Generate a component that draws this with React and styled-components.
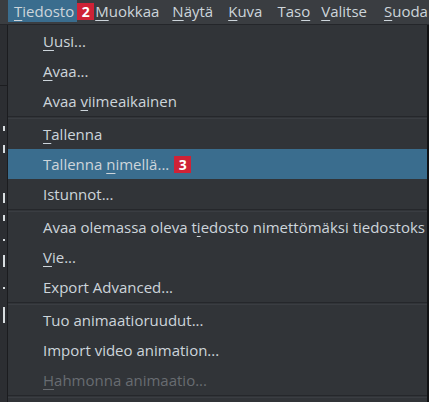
import React from "react";
import styled, { createGlobalStyle } from "styled-components";

const Global = createGlobalStyle`
  html, body { margin: 0; padding: 0; background: #2b2d31; }
  body { width: 429px; height: 402px; overflow: hidden; }
  #root { width: 429px; height: 402px; }
`;

const Screen = styled.div`
  width: 429px;
  height: 402px;
  display: flex;
  flex-direction: column;
  background: #313438;
  font-family: "Open Sans", "Noto Sans", sans-serif;
  font-size: 15px;
  color: #cdd5db;
  overflow: hidden;
`;

const MenuBar = styled.div`
  height: 24px;
  flex: none;
  display: flex;
  align-items: stretch;
  background: #3a3d41;
  border-bottom: 1px solid #24262a;
  padding-left: 8px;
  white-space: nowrap;
  overflow: hidden;
`;

const BarItem = styled.div`
  display: flex;
  align-items: center;
  padding: 0 ${(p) => p.$pr ?? 8}px 0 ${(p) => p.$pl ?? 7}px;
  height: 22px;
  flex: none;
  background: ${(p) => (p.$active ? "#3a6d8e" : "transparent")};
  color: #cdd5db;
`;

const Mn = styled.span`
  text-decoration: underline;
  text-decoration-thickness: 1px;
  text-underline-offset: 3px;
`;

const Badge = styled.span`
  display: inline-flex;
  align-items: center;
  justify-content: center;
  width: 17px;
  height: 17px;
  background: #cf2236;
  color: #ffffff;
  font-family: "Open Sans", "Noto Sans", sans-serif;
  font-weight: 700;
  font-size: 14px;
  margin-left: ${(p) => p.$ml ?? 0}px;
  margin-top: ${(p) => p.$mt ?? 0}px;
  flex: none;
`;

const Body = styled.div`
  flex: 1;
  display: flex;
  min-height: 0;
`;

const SideStrip = styled.div`
  width: 7px;
  flex: none;
  background: #2c2e32;
  border-right: 1px solid #1b1c1f;
  display: flex;
  flex-direction: column;
  align-items: center;
  padding-top: 60px;
`;

const Tick = styled.div`
  width: ${(p) => p.$w ?? 2}px;
  height: ${(p) => p.$h}px;
  margin-top: ${(p) => p.$mt}px;
  background: ${(p) => p.$c ?? "#d8dde0"};
`;

const Menu = styled.div`
  flex: 1;
  display: flex;
  flex-direction: column;
  padding-top: 1px;
  background: #313438;
  overflow: hidden;
`;

const Item = styled.div`
  height: 30px;
  flex: none;
  display: flex;
  align-items: center;
  padding-left: 35px;
  white-space: nowrap;
  background: ${(p) => (p.$active ? "#3a6d8e" : "transparent")};
  color: ${(p) => (p.$disabled ? "#686c71" : "#cdd5db")};
`;

const Sep = styled.div`
  height: 3px;
  flex: none;
  border-top: 1px solid #25272b;
  border-bottom: 1px solid #3a3d42;
  box-sizing: border-box;
`;

const RightEdge = styled.div`
  width: 2px;
  flex: none;
  background: #111214;
`;

export default function App() {
  return (
    <>
      <Global />
      <Screen>
        <MenuBar>
          <BarItem $active $pl={6} $pr={3}>
            <Mn>T</Mn>iedosto
          </BarItem>
          <Badge $mt={3}>2</Badge>
          <BarItem $pl={1} $pr={8}>
            <Mn>M</Mn>uokkaa
          </BarItem>
          <BarItem $pl={5} $pr={7}>
            <Mn>N</Mn>äytä
          </BarItem>
          <BarItem $pl={8} $pr={9}>
            <Mn>K</Mn>uva
          </BarItem>
          <BarItem $pl={6} $pr={3}>
            Tas<Mn>o</Mn>
          </BarItem>
          <BarItem $pl={8} $pr={10}>
            <Mn>V</Mn>alitse
          </BarItem>
          <BarItem $pl={7} $pr={0}>
            <Mn>S</Mn>uoda
          </BarItem>
        </MenuBar>
        <Body>
          <SideStrip>
            <Tick $w={7} $h={1} $mt={0} $c="#1c1d20" />
            <Tick $h={5} $mt={40} />
            <Tick $h={8} $mt={14} />
            <Tick $h={10} $mt={40} />
            <Tick $h={6} $mt={12} />
            <Tick $h={2} $mt={18} />
            <Tick $h={12} $mt={14} />
            <Tick $h={2} $mt={20} />
            <Tick $h={16} $mt={18} />
          </SideStrip>
          <Menu>
            <Item><Mn>U</Mn>usi...</Item>
            <Item><Mn>A</Mn>vaa...</Item>
            <Item>Avaa&nbsp;<Mn>v</Mn>iimeaikainen</Item>
            <Sep />
            <Item><Mn>T</Mn>allenna</Item>
            <Item $active>
              Tallenna&nbsp;<Mn>n</Mn>imellä...
              <Badge $ml={5}>3</Badge>
            </Item>
            <Item>Istunnot...</Item>
            <Sep />
            <Item>Avaa olemassa oleva t<Mn>i</Mn>edosto nimettömäksi tiedostoks</Item>
            <Item><Mn>V</Mn>ie...</Item>
            <Item>Export Advanced...</Item>
            <Sep />
            <Item>Tuo animaatioruudut...</Item>
            <Item>Import video animation...</Item>
            <Item $disabled><Mn>H</Mn>ahmonna animaatio...</Item>
            <Sep />
          </Menu>
          <RightEdge />
        </Body>
      </Screen>
    </>
  );
}
